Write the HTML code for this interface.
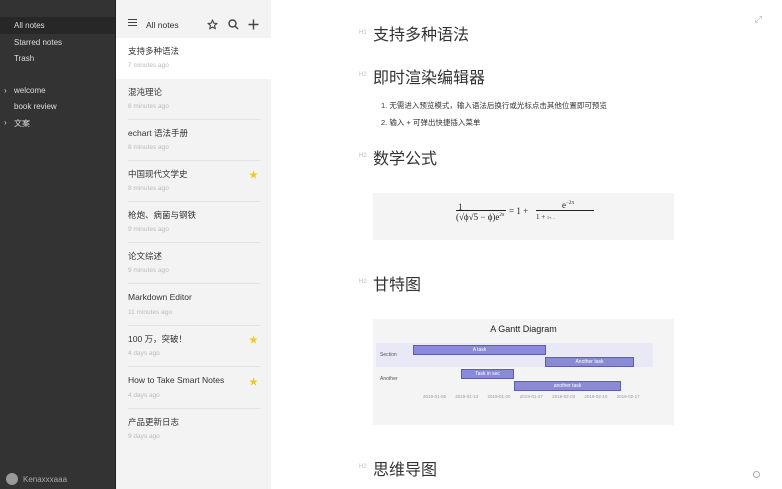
<!DOCTYPE html>
<html><head><meta charset="utf-8"><style>
*{margin:0;padding:0;box-sizing:border-box}
body{width:782px;height:489px;overflow:hidden;font-family:"Liberation Sans","Noto Sans CJK SC",sans-serif;background:#fff;position:relative}
.sb{position:absolute;left:0;top:0;width:115px;height:489px;background:#333;color:#ddd;font-size:8px}
.sb div{position:absolute;left:14px}
.act{left:0!important;width:115px;height:17px;top:17px;background:#272727}
.list{position:absolute;left:115px;top:0;width:156px;height:489px;background:#f3f3f3;border-left:1px solid #222}
.it{position:absolute;left:0;width:156px;height:41px}
.it .t{position:absolute;left:12px;top:7px;font-size:8.5px;color:#333}
.it .d{position:absolute;left:12px;top:24px;font-size:6.5px;color:#bbb}
.it .ln{position:absolute;left:12px;right:12px;bottom:0;border-bottom:1px solid #e2e2e2}
.star{position:absolute;right:14px;top:7px;color:#f5c518;font-size:9px}
.main{position:absolute;left:271px;top:0;width:511px;height:489px;background:#fff}
.h{position:absolute;left:102px;font-size:16px;color:#333}
.lb{position:absolute;left:88px;font-size:6px;color:#bbb}
.box{position:absolute;left:102px;width:301px;background:#f4f4f4}
</style></head><body>
<div class="sb">
<div class="act"></div>
<div style="top:21px">All notes</div>
<div style="top:38px">Starred notes</div>
<div style="top:54px">Trash</div>
<div style="top:86px;left:4px">›</div><div style="top:86px">welcome</div>
<div style="top:102px">book review</div>
<div style="top:118px;left:4px">›</div><div style="top:118px">文案</div>
<div style="top:473px;left:6px;width:12px;height:12px;border-radius:50%;background:#999"></div>
<div style="top:475px;left:23px;color:#aaa">Kenaxxxaaa</div>
</div>
<div class="list">
<div style="position:absolute;left:12px;top:19px;width:9px;height:7px;border-top:1.5px solid #444;border-bottom:1.5px solid #444"></div>
<div style="position:absolute;left:12px;top:22px;width:9px;border-top:1.5px solid #444"></div>
<div style="position:absolute;left:30px;top:20px;font-size:8.5px;color:#333">All notes</div>
<svg style="position:absolute;left:91px;top:19px" width="11" height="11"><path d="M5.5 1L6.8 4.2 10 4.4 7.5 6.5 8.3 9.8 5.5 8 2.7 9.8 3.5 6.5 1 4.4 4.2 4.2Z" fill="none" stroke="#444" stroke-width="1.1" stroke-linejoin="round"/></svg>
<svg style="position:absolute;left:112px;top:19px" width="11" height="11"><circle cx="4.5" cy="4.5" r="3.5" fill="none" stroke="#444" stroke-width="1.4"/><line x1="7" y1="7" x2="10" y2="10" stroke="#444" stroke-width="1.4"/></svg>
<svg style="position:absolute;left:132px;top:19px" width="11" height="11"><path d="M5.5 0.5V10.5M0.5 5.5H10.5" stroke="#444" stroke-width="1.4"/></svg>
<div class="it" style="top:38px;background:#fff"><div class="t">支持多种语法</div><div class="d">7 minutes ago</div></div>
<div class="it" style="top:79px"><div class="t">混沌理论</div><div class="d">8 minutes ago</div><div class="ln"></div></div>
<div class="it" style="top:120px"><div class="t">echart 语法手册</div><div class="d">8 minutes ago</div><div class="ln"></div></div>
<div class="it" style="top:161px"><div class="t">中国现代文学史</div><div class="star">★</div><div class="d">8 minutes ago</div><div class="ln"></div></div>
<div class="it" style="top:202px"><div class="t">枪炮、病菌与钢铁</div><div class="d">9 minutes ago</div><div class="ln"></div></div>
<div class="it" style="top:243px"><div class="t">论文综述</div><div class="d">9 minutes ago</div><div class="ln"></div></div>
<div class="it" style="top:285px"><div class="t">Markdown Editor</div><div class="d">11 minutes ago</div><div class="ln"></div></div>
<div class="it" style="top:326px"><div class="t">100 万，突破！</div><div class="star">★</div><div class="d">4 days ago</div><div class="ln"></div></div>
<div class="it" style="top:368px"><div class="t">How to Take Smart Notes</div><div class="star">★</div><div class="d">4 days ago</div><div class="ln"></div></div>
<div class="it" style="top:409px"><div class="t">产品更新日志</div><div class="d">9 days ago</div></div>
</div>
<div class="main">
<div style="position:absolute;right:20px;top:14px;font-size:9px;color:#aaa">⤢</div>
<div style="position:absolute;right:22px;top:471px;width:7px;height:7px;border:1px solid #aaa;border-radius:50%"></div>
<div class="lb" style="top:30px">H1</div><div class="h" style="top:21px">支持多种语法</div>
<div class="lb" style="top:72px">H2</div><div class="h" style="top:64px">即时渲染编辑器</div>
<div style="position:absolute;left:110px;top:100px;font-size:7.5px;color:#333">1. 无需进入预览模式，输入语法后换行或光标点击其他位置即可预览</div>
<div style="position:absolute;left:110px;top:117px;font-size:7.5px;color:#333">2. 输入 + 可弹出快捷插入菜单</div>
<div class="lb" style="top:153px">H2</div><div class="h" style="top:145px">数学公式</div>
<div class="box" style="top:193px;height:47px;font-family:'Liberation Serif',serif;font-size:9px;color:#222">
<div style="position:absolute;left:85px;top:9px">1</div>
<div style="position:absolute;left:83px;top:17px;width:50px;border-top:1px solid #222"></div>
<div style="position:absolute;left:83px;top:19px">(√ϕ√5 − ϕ)e<sup style="font-size:5px">2π</sup></div>
<div style="position:absolute;left:136px;top:13px">= 1 +</div>
<div style="position:absolute;left:189px;top:7px">e<sup style="font-size:5px">−2π</sup></div>
<div style="position:absolute;left:163px;top:17px;width:58px;border-top:1px solid #222"></div>
<div style="position:absolute;left:163px;top:20px;font-size:7px">1 + <span style="font-size:4px">1+…</span></div>
</div>
<div class="lb" style="top:279px">H2</div><div class="h" style="top:271px">甘特图</div>
<div class="box" style="top:319px;height:106px;font-size:5px;color:#555">
<div style="position:absolute;left:0;width:301px;top:5px;text-align:center;font-size:9px;color:#222">A Gantt Diagram</div>
<div style="position:absolute;left:3px;top:24px;width:277px;height:24px;background:#e8e8f6"></div>
<div style="position:absolute;left:7px;top:33px">Section</div>
<div style="position:absolute;left:7px;top:57px">Another</div>
<div style="position:absolute;left:40px;top:26px;width:133px;height:10px;background:#8a8ad9;border:1px solid #5c5cbf;color:#fff;text-align:center;line-height:8px">A task</div>
<div style="position:absolute;left:172px;top:38px;width:89px;height:10px;background:#8a8ad9;border:1px solid #5c5cbf;color:#fff;text-align:center;line-height:8px">Another task</div>
<div style="position:absolute;left:88px;top:50px;width:53px;height:10px;background:#8a8ad9;border:1px solid #5c5cbf;color:#fff;text-align:center;line-height:8px">Task in sec</div>
<div style="position:absolute;left:141px;top:62px;width:107px;height:10px;background:#8a8ad9;border:1px solid #5c5cbf;color:#fff;text-align:center;line-height:8px">another task</div>
<div style="position:absolute;left:50px;top:75px;color:#999;word-spacing:8px;font-size:4.5px">2019-01-06 2019-01-13 2019-01-20 2019-01-27 2019-02-03 2019-02-10 2019-02-17</div>
</div>
<div class="lb" style="top:464px">H2</div><div class="h" style="top:456px">思维导图</div>
</div>
</body></html>
